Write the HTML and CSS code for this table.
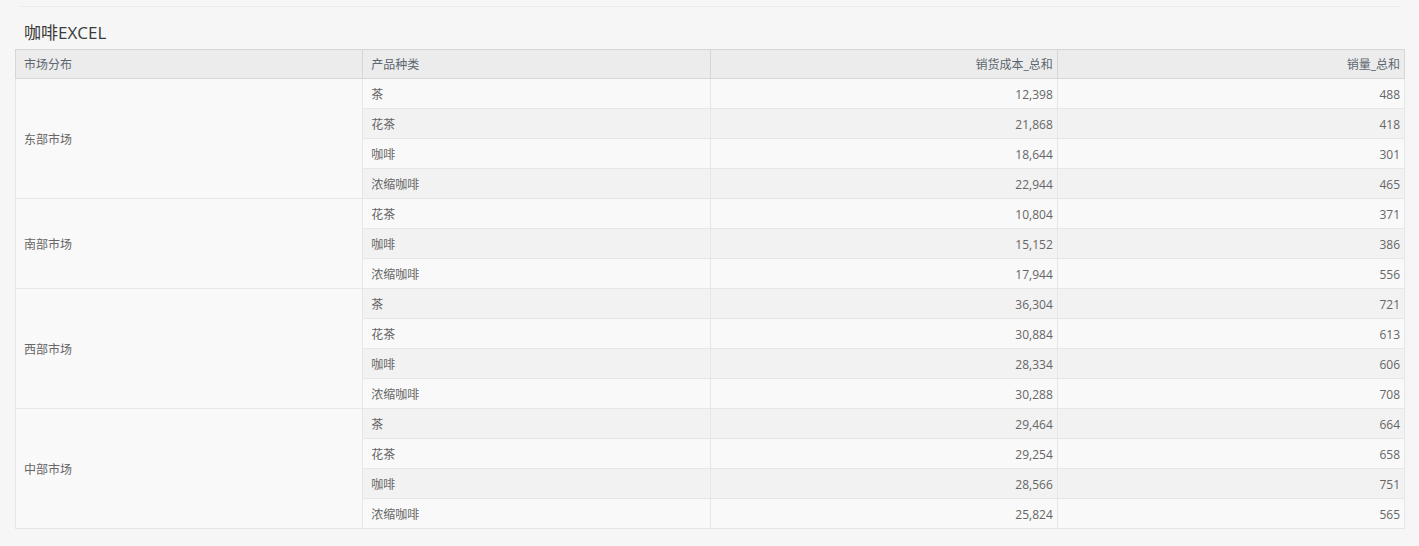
FILE: index.html
```html
<!DOCTYPE html>
<html lang="zh">
<head>
<meta charset="utf-8">
<link rel="stylesheet" href="styles.css">
</head>
<body>
<div class="page">
  <div class="topline"></div>
  <h1 class="title">咖啡EXCEL</h1>
  <table class="grid">
    <colgroup><col class="c"><col class="c"><col class="c"><col class="c"></colgroup>
    <thead>
      <tr><th>市场分布</th><th>产品种类</th><th class="num">销货成本_总和</th><th class="num">销量_总和</th></tr>
    </thead>
    <tbody>
      <tr class="l"><td class="grp" rowspan="4">东部市场</td><td>茶</td><td class="num">12,398</td><td class="num">488</td></tr>
      <tr class="d"><td>花茶</td><td class="num">21,868</td><td class="num">418</td></tr>
      <tr class="l"><td>咖啡</td><td class="num">18,644</td><td class="num">301</td></tr>
      <tr class="d"><td>浓缩咖啡</td><td class="num">22,944</td><td class="num">465</td></tr>
      <tr class="l"><td class="grp" rowspan="3">南部市场</td><td>花茶</td><td class="num">10,804</td><td class="num">371</td></tr>
      <tr class="d"><td>咖啡</td><td class="num">15,152</td><td class="num">386</td></tr>
      <tr class="l"><td>浓缩咖啡</td><td class="num">17,944</td><td class="num">556</td></tr>
      <tr class="d"><td class="grp" rowspan="4">西部市场</td><td>茶</td><td class="num">36,304</td><td class="num">721</td></tr>
      <tr class="l"><td>花茶</td><td class="num">30,884</td><td class="num">613</td></tr>
      <tr class="d"><td>咖啡</td><td class="num">28,334</td><td class="num">606</td></tr>
      <tr class="l"><td>浓缩咖啡</td><td class="num">30,288</td><td class="num">708</td></tr>
      <tr class="d"><td class="grp" rowspan="4">中部市场</td><td>茶</td><td class="num">29,464</td><td class="num">664</td></tr>
      <tr class="l"><td>花茶</td><td class="num">29,254</td><td class="num">658</td></tr>
      <tr class="d"><td>咖啡</td><td class="num">28,566</td><td class="num">751</td></tr>
      <tr class="l"><td>浓缩咖啡</td><td class="num">25,824</td><td class="num">565</td></tr>
    </tbody>
  </table>
</div>
</body>
</html>
```
FILE: styles.css
```css
html, body {
  margin: 0;
  padding: 0;
  background: #f6f6f6;
}
body {
  font-family: "Open Sans", "Noto Sans CJK SC", sans-serif;
  color: #666;
}
.page {
  padding: 6px 14px 0 15px;
}
.topline {
  height: 1px;
  background: #ebebeb;
  margin: 0 5px 0 5px;
}
.title {
  margin: 14px 0 0 9px;
  height: 28px;
  font-size: 17px;
  font-weight: normal;
  line-height: 24px;
  color: #3a3a3a;
}
.grid {
  width: 1390px;
  border-collapse: collapse;
  table-layout: fixed;
  font-size: 12px;
}
.grid th, .grid td {
  border: 1px solid #e6e6e6;
  height: 30px;
  padding: 2px 4px 0 8px;
  text-align: left;
  font-weight: normal;
  line-height: 16px;
  box-sizing: border-box;
  color: #666;
}
.grid thead th {
  height: 29px;
  padding-top: 1px;
  background: #ececec;
  border-color: #d6d6d6;
  color: #5d6670;
}
.grid .num {
  text-align: right;
}
.grid tr.l td {
  background: #f9f9f9;
}
.grid tr.d td {
  background: #f2f2f2;
}
.grid td.grp {
  background: #f9f9f9 !important;
}
```
